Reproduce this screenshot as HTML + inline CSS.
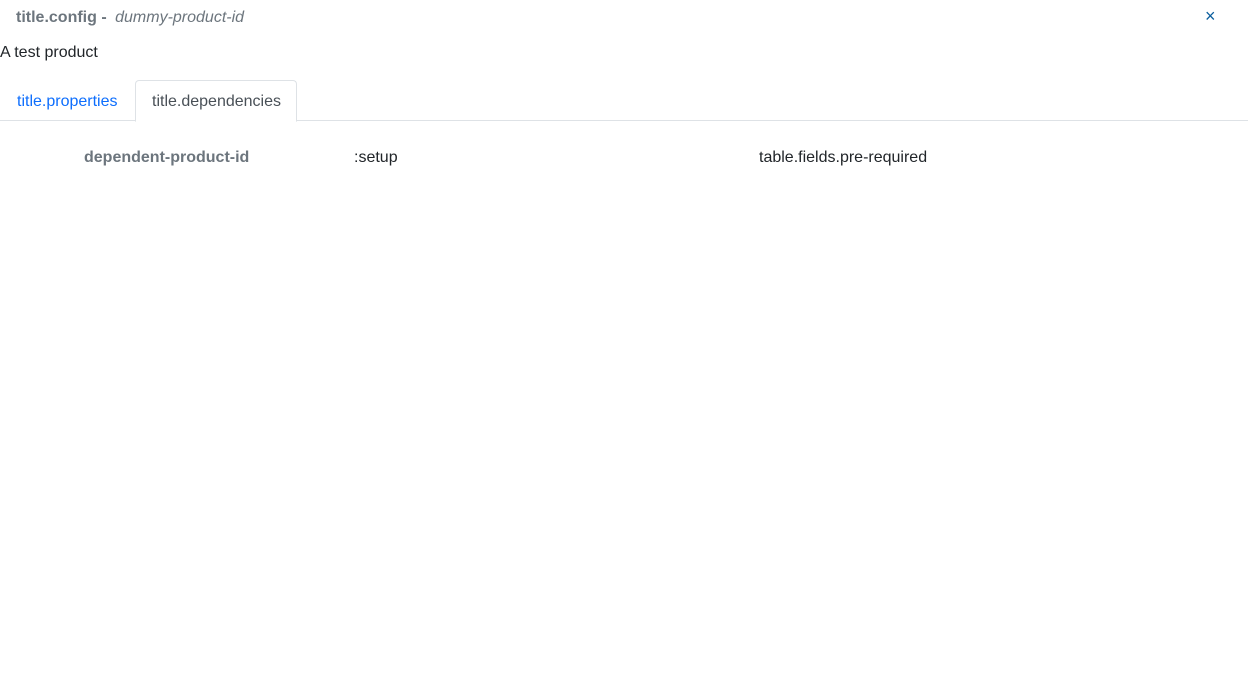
<!DOCTYPE html>
<html><head><style>
body{margin:0;width:1248px;height:685px;background:#fff;font-family:"Liberation Sans",sans-serif;font-size:16px;color:#212529;position:relative;overflow:hidden}
.a{position:absolute;white-space:nowrap}
</style></head><body>
<div class="a" style="left:16px;top:9px;color:#6c757d;font-weight:bold">title.config - <span style="font-weight:normal;font-style:italic;margin-left:4px">dummy-product-id</span></div>
<div class="a" style="left:1205px;top:6px;color:#0b5e9e;font-size:18px">×</div>
<div class="a" style="left:0;top:44px">A test product</div>
<div class="a" style="left:0;top:120px;width:1248px;height:1px;background:#dee2e6"></div>
<div class="a" style="left:17px;top:93px;color:#0d6efd">title.properties</div>
<div class="a" style="left:135px;top:80px;width:160px;height:40px;border:1px solid #dee2e6;border-bottom:1px solid #fff;border-radius:4px 4px 0 0;background:#fff"></div>
<div class="a" style="left:152px;top:93px;color:#495057">title.dependencies</div>
<div class="a" style="left:84px;top:149px;color:#6c757d;font-weight:bold">dependent-product-id</div>
<div class="a" style="left:354px;top:149px">:setup</div>
<div class="a" style="left:759px;top:149px">table.fields.pre-required</div>
</body></html>
